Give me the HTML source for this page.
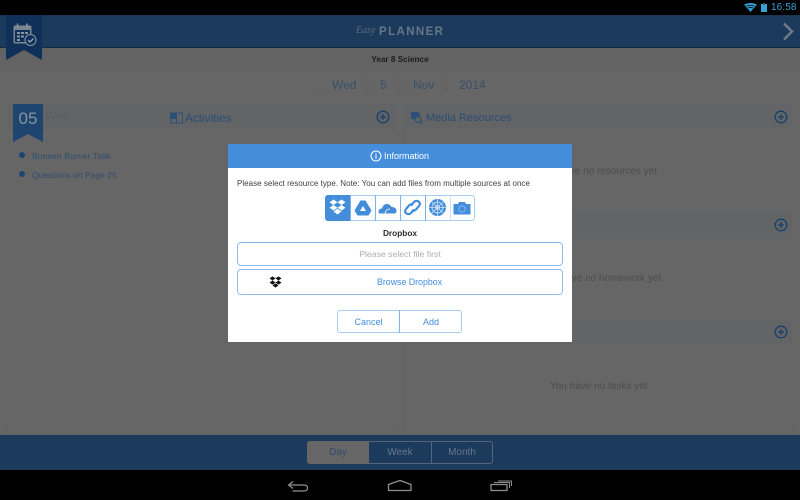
<!DOCTYPE html>
<html><head><meta charset="utf-8">
<style>
html,body{margin:0;padding:0;background:#666}
body{width:800px;height:500px;position:relative;overflow:hidden;font-family:"Liberation Sans",sans-serif}
.a{position:absolute;white-space:nowrap}
.c{text-align:center}
svg{position:absolute;display:block;overflow:visible}
</style></head><body>
<!-- status bar -->
<div class="a" style="left:0;top:0;width:800px;height:15px;background:#000"></div>
<svg style="left:744px;top:3px" width="13" height="9" viewBox="0 0 13 9"><path d="M0 1.500Q6.500-1.500 13 1.500L6.500 9Z" fill="#2f9fd0"/><path d="M2.500 3.200Q6.500 1.500 10.500 3.200M4 5Q6.500 4 9 5" stroke="#000" stroke-width=".7" fill="none"/></svg>
<div class="a" style="left:761px;top:4px;width:6px;height:8px;background:#35a5d5"></div>
<div class="a" style="left:763px;top:2.500px;width:2px;height:2px;background:#555"></div>
<div class="a" style="left:771px;top:1px;font-size:10px;line-height:14px;color:#35a5d5;letter-spacing:.1px">16:58</div>
<!-- header -->
<div class="a" style="left:0;top:15px;width:800px;height:33px;background:#1c3a5c;border-top:1px solid #1a3554;border-bottom:1px solid #14293f;box-sizing:border-box"></div>
<div class="a" style="left:356px;top:25px;font:italic 10px 'Liberation Serif',serif;color:#5d6d7e">Easy</div>
<div class="a" style="left:379px;top:26px;font:bold 11.500px 'Liberation Sans',sans-serif;color:#66778a;letter-spacing:1.400px">PLANNER</div>
<svg style="left:781px;top:22px" width="14" height="19" viewBox="0 0 14 19"><path d="M3 1.500L11 9.500 3 17.500" stroke="#6f7a85" stroke-width="2.500" fill="none"/></svg>
<!-- subheader -->
<div class="a" style="left:0;top:48px;width:800px;height:23px;background:#636363"></div>
<div class="a c" style="left:300px;top:54px;width:200px;font:bold 8.200px/11px 'Liberation Sans',sans-serif;color:#1c1c1c">Year 8 Science</div>
<!-- ribbon -->
<svg style="left:6px;top:15px" width="36" height="45" viewBox="0 0 36 45"><path d="M0 0H36V45L18 35 0 45Z" fill="#0f3058"/></svg>
<svg style="left:13px;top:23px" width="24" height="24" viewBox="0 0 24 24"><rect x="0.500" y="2.500" width="18" height="18" rx="1.500" fill="#7a8591"/><rect x="2" y="7" width="15" height="12" fill="#0f3058"/><path d="M4.500 0.500v4M14 0.500v4" stroke="#8a95a0" stroke-width="1.500"/><path d="M4 9h3v2H4zM8 9h3v2H8zM12 9h3v2h-3zM4 12.500h3v2H4zM8 12.500h3v2H8zM4 16h3v2H4z" fill="#8a95a0"/><circle cx="17.500" cy="17" r="5.500" fill="#0f3058" stroke="#8a95a0"/><path d="M15 17l2 2 3.500-3.500" stroke="#9aa4ae" stroke-width="1.300" fill="none"/></svg>
<!-- date -->
<div class="a" style="left:332px;top:78px;font-size:12px;line-height:14px;color:#36506c">Wed</div>
<div class="a" style="left:380px;top:78px;font-size:12px;line-height:14px;color:#36506c">5</div>
<div class="a" style="left:413px;top:78px;font-size:12px;line-height:14px;color:#36506c">Nov</div>
<div class="a" style="left:459px;top:78px;font-size:12px;line-height:14px;color:#36506c">2014</div>
<svg style="left:315px;top:76px" width="135" height="18" viewBox="0 0 135 18"><path d="M2 6l3-3 3 3M2 12l3 3 3-3M49 6l3-3 3 3M49 12l3 3 3-3M81 6l3-3 3 3M81 12l3 3 3-3M128 6l3-3 3 3M128 12l3 3 3-3" stroke="#5d6166" fill="none"/></svg>
<!-- left panel -->
<div class="a" style="left:6px;top:104px;width:393px;height:328px;border:1px solid #626262;box-sizing:border-box"></div>
<div class="a" style="left:6px;top:104px;width:393px;height:26px;background:#636466"></div>
<svg style="left:13px;top:104px" width="30" height="38" viewBox="0 0 30 38"><path d="M0 0H30V38L15 30 0 38Z" fill="#1d4570"/></svg>
<div class="a c" style="left:13px;top:109px;width:30px;font-size:17px;line-height:20px;color:#8793a0">05</div>
<div class="a" style="left:46px;top:110px;font-size:10.500px;line-height:13px;color:#5c5c5c">Wed</div>
<svg style="left:170px;top:112px" width="13" height="12" viewBox="0 0 13 12"><path d="M.5 1H12.500V11H.5ZM6.500 1V11" stroke="#2a5078" fill="none"/><path d="M1 1h5v6H1z" fill="#2a5078"/></svg>
<div class="a" style="left:185px;top:111px;font-size:11.800px;line-height:14px;color:#2a4d75">Activities</div>
<svg style="left:376px;top:110px" width="14" height="14" viewBox="0 0 14 14"><circle cx="7" cy="7" r="5.800" stroke="#173f6c" stroke-width="1.300" fill="none"/><path d="M7 4v6M4 7h6" stroke="#173f6c" stroke-width="1.300"/></svg>
<div class="a" style="left:19px;top:152px;width:6px;height:6px;border-radius:50%;background:#1d4570"></div>
<div class="a" style="left:32px;top:150px;font-size:8.600px;line-height:12px;color:#2e4d70;letter-spacing:.1px">Bunsen Burner Task</div>
<div class="a" style="left:19px;top:171px;width:6px;height:6px;border-radius:50%;background:#1d4570"></div>
<div class="a" style="left:32px;top:169px;font-size:8.400px;line-height:12px;color:#2e4d70;letter-spacing:.1px">Questions on Page 25</div>
<!-- right panels -->
<div class="a" style="left:403px;top:104px;width:391px;height:328px;border:1px solid #626262;box-sizing:border-box"></div>
<div class="a" style="left:403px;top:104px;width:391px;height:26px;background:#636466"></div>
<div class="a" style="left:403px;top:212px;width:391px;height:26px;background:#636466"></div>
<div class="a" style="left:403px;top:320px;width:391px;height:26px;background:#636466"></div>
<svg style="left:410px;top:111px" width="13" height="13" viewBox="0 0 13 13"><path d="M1 1h7l2 2v5H1z" fill="#2a5078"/><circle cx="8" cy="8.500" r="3" fill="#636466" stroke="#2a5078" stroke-width="1.200"/><path d="M10 10.500l2 2" stroke="#2a5078" stroke-width="1.400"/></svg>
<div class="a" style="left:426px;top:111px;font-size:11px;line-height:14px;color:#2a4d75">Media Resources</div>
<svg style="left:774px;top:110px" width="14" height="14" viewBox="0 0 14 14"><circle cx="7" cy="7" r="5.800" stroke="#173f6c" stroke-width="1.300" fill="none"/><path d="M7 4v6M4 7h6" stroke="#173f6c" stroke-width="1.300"/></svg>
<svg style="left:774px;top:218px" width="14" height="14" viewBox="0 0 14 14"><circle cx="7" cy="7" r="5.800" stroke="#173f6c" stroke-width="1.300" fill="none"/><path d="M7 4v6M4 7h6" stroke="#173f6c" stroke-width="1.300"/></svg>
<svg style="left:774px;top:325px" width="14" height="14" viewBox="0 0 14 14"><circle cx="7" cy="7" r="5.800" stroke="#173f6c" stroke-width="1.300" fill="none"/><path d="M7 4v6M4 7h6" stroke="#173f6c" stroke-width="1.300"/></svg>
<div class="a" style="left:539px;top:165px;font-size:10px;line-height:12px;color:#4d4d4d;transform:translateY(1px)">You have no resources yet</div>
<div class="a" style="left:541px;top:273px;font-size:10px;line-height:12px;color:#4d4d4d">You have no homework yet</div>
<div class="a" style="left:550px;top:381px;font-size:10px;line-height:12px;color:#4d4d4d">You have no tasks yet</div>
<!-- bottom tabs -->
<div class="a" style="left:0;top:435px;width:800px;height:35px;background:#1c3a5c"></div>
<div class="a" style="left:307px;top:441px;width:186px;height:23px;border:1px solid #56667a;border-radius:3px;box-sizing:border-box;background:#1c3a5c"></div>
<div class="a" style="left:307px;top:441px;width:62px;height:23px;background:#666;border-radius:3px 0 0 3px"></div>
<div class="a" style="left:431px;top:441px;width:1px;height:23px;background:#56667a"></div>
<div class="a c" style="left:307px;top:446px;width:62px;font-size:10px;line-height:13px;color:#2f4a6a">Day</div>
<div class="a c" style="left:369px;top:446px;width:62px;font-size:10px;line-height:13px;color:#67768a">Week</div>
<div class="a c" style="left:431px;top:446px;width:62px;font-size:10px;line-height:13px;color:#67768a">Month</div>
<!-- nav bar -->
<div class="a" style="left:0;top:470px;width:800px;height:30px;background:#000"></div>
<svg style="left:285px;top:477px" width="240" height="18" viewBox="0 0 240 18"><path d="M8 4.500L3.500 8 8 11.500M3.500 8H18.500Q22.500 8 22.500 11T18.500 14H7.500" stroke="#8f8f8f" stroke-width="1.200" fill="none"/><path d="M103.500 7.500L115 3.500 126 7.500V13.500H103.500Z" stroke="#8f8f8f" stroke-width="1.300" fill="none"/><path d="M206 7.500H222V13.500H206Z" stroke="#8f8f8f" stroke-width="1.300" fill="none"/><path d="M209 5.500H224.500V11" stroke="#8f8f8f" fill="none"/><path d="M213 4H226.500V9" stroke="#8f8f8f" fill="none"/></svg>
<!-- modal -->
<div class="a" style="left:228px;top:144px;width:344px;height:198px;background:#fff"></div>
<div class="a" style="left:228px;top:144px;width:344px;height:24px;background:#438ddb"></div>
<svg style="left:370px;top:150px" width="12" height="12" viewBox="0 0 12 12"><circle cx="6" cy="6" r="5" stroke="#fff" fill="none"/><path d="M6 5v4M6 3v1.200" stroke="#fff"/></svg>
<div class="a" style="left:384px;top:150px;font-size:9px;line-height:12px;color:#fff">Information</div>
<div class="a" style="left:237px;top:178px;font-size:8px;line-height:12px;color:#404040;letter-spacing:.02px">Please select resource type. Note: You can add files from multiple sources at once</div>
<!-- source icons -->
<div class="a" style="left:325px;top:195px;width:150px;height:26px;border:1px solid #a8cbf0;border-radius:3px;box-sizing:border-box"></div>
<div class="a" style="left:325px;top:195px;width:25px;height:26px;background:#438ddb;border-radius:3px 0 0 3px"></div>
<div class="a" style="left:350px;top:195px;width:1px;height:26px;background:#7fb2e8"></div>
<div class="a" style="left:375px;top:195px;width:1px;height:26px;background:#7fb2e8"></div>
<div class="a" style="left:400px;top:195px;width:1px;height:26px;background:#7fb2e8"></div>
<div class="a" style="left:425px;top:195px;width:1px;height:26px;background:#7fb2e8"></div>
<div class="a" style="left:450px;top:195px;width:1px;height:26px;background:#cfe1f6"></div>
<svg style="left:329px;top:199px" width="17" height="17" viewBox="0 0 17 17"><path d="M4.500 .5L8.500 3.200 4.500 6 .5 3.200ZM12.500 .5L16.500 3.200 12.500 6 8.500 3.200ZM4.500 6L8.500 8.800 4.500 11.500 .5 8.800ZM12.500 6L16.500 8.800 12.500 11.500 8.500 8.800ZM4.500 12.500L8.500 9.800 12.500 12.500 8.500 15.500Z" fill="#fff"/></svg>
<svg style="left:354px;top:200px" width="18" height="16" viewBox="0 0 18 16"><path d="M6.500 .5H11.500L17.500 10.500 14.500 15.500H3.500L.5 10.500Z" fill="#438ddb"/><path d="M9 6L12 11H6Z" fill="#fff"/></svg>
<svg style="left:378px;top:202px" width="19" height="12" viewBox="0 0 19 12"><path d="M.5 10Q.5 6.500 4 6.500 5 2 9 2q3 0 4.500 3Q18.500 5 18.500 9q0 2-2 2.500H2Q.5 11.500.5 10Z" fill="#438ddb"/><path d="M7 11.500Q8 7 12 7" stroke="#fff" stroke-width=".8" fill="none"/></svg>
<svg style="left:403px;top:199px" width="19" height="17" viewBox="0 0 19 17"><g fill="none" stroke="#438ddb" stroke-width="2.200"><path d="M8 6.500L11 3Q13 1 15.500 2.500T16 7L13 10.500Q11 12.500 9 11"/><path d="M11 10.500L8 14Q6 16 3.500 14.500T3 10L6 6.500Q8 4.500 10 6"/></g></svg>
<svg style="left:428px;top:198px" width="19" height="19" viewBox="0 0 19 19"><circle cx="9.500" cy="9.500" r="8.500" fill="#438ddb"/><g stroke="#cfe3f8" stroke-width=".8" fill="none"><circle cx="9.500" cy="9.500" r="5.500"/><circle cx="9.500" cy="9.500" r="2"/><path d="M9.500 1V18M1 9.500H18M3.500 3.500L15.500 15.500M15.500 3.500L3.500 15.500"/></g></svg>
<svg style="left:453px;top:201px" width="18" height="14" viewBox="0 0 18 14"><path d="M.5 3H5L6 1H12L13 3H17.500V13.500H.5Z" fill="#438ddb"/><circle cx="9" cy="8" r="3.200" fill="none" stroke="#8fbdee" stroke-width=".9"/></svg>
<div class="a c" style="left:228px;top:227px;width:344px;font:bold 8.300px/12px 'Liberation Sans',sans-serif;color:#2d2d2d">Dropbox</div>
<div class="a c" style="left:237px;top:242px;width:326px;height:24px;border:1px solid #8dbcee;border-radius:4px;box-sizing:border-box;font-size:8.700px;line-height:23px;color:#adadad">Please select file first</div>
<div class="a" style="left:237px;top:269px;width:326px;height:26px;border:1px solid #8dbcee;border-radius:4px;box-sizing:border-box"></div>
<svg style="left:269px;top:276px" width="13" height="12" viewBox="0 0 17 16"><path d="M4.500 .5L8.500 3.200 4.500 6 .5 3.200ZM12.500 .5L16.500 3.200 12.500 6 8.500 3.200ZM4.500 6L8.500 8.800 4.500 11.500 .5 8.800ZM12.500 6L16.500 8.800 12.500 11.500 8.500 8.800ZM4.500 12.500L8.500 9.800 12.500 12.500 8.500 15.500Z" fill="#111"/></svg>
<div class="a" style="left:377px;top:276px;font-size:8.800px;line-height:12px;color:#438ddb">Browse Dropbox</div>
<div class="a" style="left:337px;top:310px;width:125px;height:23px;border:1px solid #a8cbf0;border-radius:3px;box-sizing:border-box"></div>
<div class="a" style="left:399px;top:310px;width:1px;height:23px;background:#7fb2e8"></div>
<div class="a c" style="left:337px;top:316px;width:63px;font-size:9px;line-height:12px;color:#438ddb">Cancel</div>
<div class="a c" style="left:400px;top:316px;width:62px;font-size:9px;line-height:12px;color:#438ddb">Add</div>
</body></html>
